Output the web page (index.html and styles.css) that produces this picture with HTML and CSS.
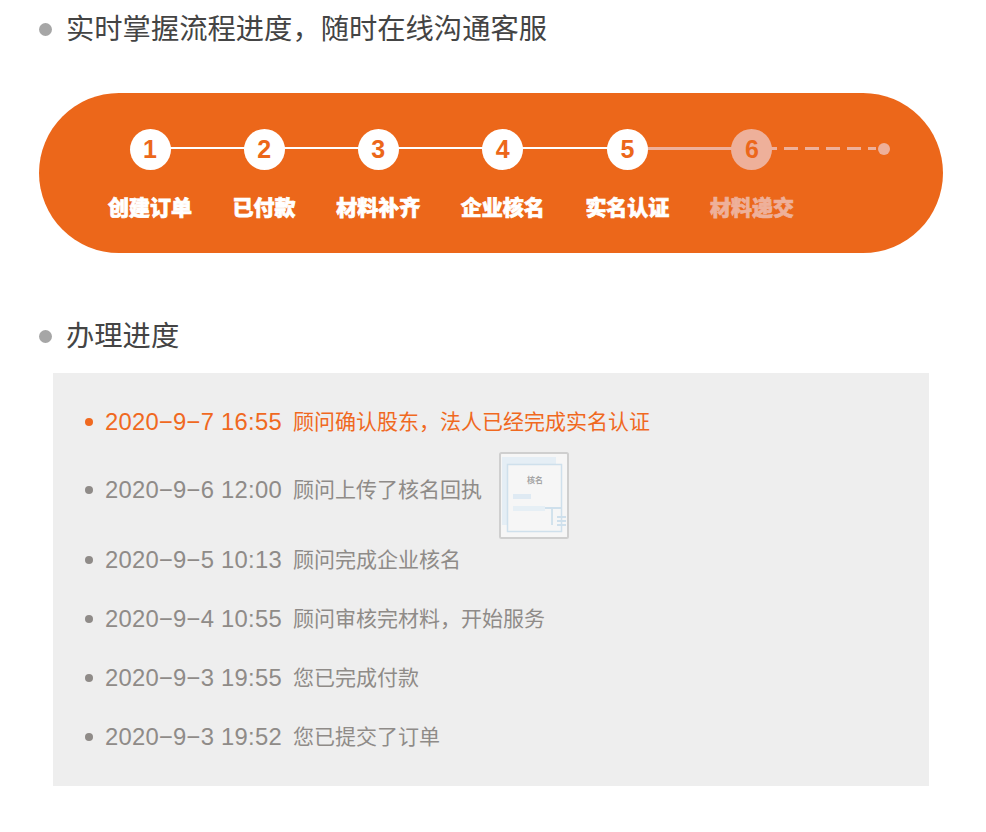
FILE: index.html
```html
<!DOCTYPE html>
<html lang="zh-CN">
<head>
<meta charset="utf-8">
<title>办理进度</title>
<link rel="stylesheet" href="styles.css">
</head>
<body>
<main class="page">
  <h2 class="heading heading-first">实时掌握流程进度，随时在线沟通客服</h2>
  <section class="pill">
    <ol class="steps">
      <li class="step"><span class="num">1</span><span class="label">创建订单</span></li>
      <li class="step"><span class="num">2</span><span class="label">已付款</span></li>
      <li class="step"><span class="num">3</span><span class="label">材料补齐</span></li>
      <li class="step"><span class="num">4</span><span class="label">企业核名</span></li>
      <li class="step step-last-done"><span class="num">5</span><span class="label">实名认证</span></li>
      <li class="step step-current"><span class="num">6</span><span class="label">材料递交</span></li>
    </ol>
  </section>
  <h2 class="heading heading-second">办理进度</h2>
  <section class="panel">
    <ul class="log">
      <li class="row row-active"><span class="time">2020−9−7 16:55</span><span class="msg">顾问确认股东，法人已经完成实名认证</span></li>
      <li class="row row-image"><span class="time">2020−9−6 12:00</span><span class="msg">顾问上传了核名回执</span>
        <svg class="thumb" viewBox="0 0 70 87" width="70" height="87">
          <defs><filter id="soft"><feGaussianBlur stdDeviation="0.5"/></filter></defs>
          <rect x="1" y="1" width="68" height="85" rx="1.5" fill="#f6f6f6" stroke="#cfcfcf" stroke-width="2"/>
          <g filter="url(#soft)">
            <rect x="3" y="5" width="54" height="68" fill="#e5eef5"/>
            <rect x="8.500" y="12.500" width="54" height="67" fill="#f6f6f6" stroke="#cfe0ec" stroke-width="1.500"/>
            <rect x="14" y="42" width="18" height="5" fill="#dfeaf3"/>
            <rect x="14" y="54" width="32" height="5" fill="#e6eff5"/>
            <path d="M46 56h16M53 56v17M58 65h9M58 69h9M58 73h9" fill="none" stroke="#cfe0ec" stroke-width="1.800"/>
          </g>
          <text class="thumb-text" x="36" y="31">核名</text>
        </svg>
      </li>
      <li class="row"><span class="time">2020−9−5 10:13</span><span class="msg">顾问完成企业核名</span></li>
      <li class="row"><span class="time">2020−9−4 10:55</span><span class="msg">顾问审核完材料，开始服务</span></li>
      <li class="row"><span class="time">2020−9−3 19:55</span><span class="msg">您已完成付款</span></li>
      <li class="row"><span class="time">2020−9−3 19:52</span><span class="msg">您已提交了订单</span></li>
    </ul>
  </section>
</main>
</body>
</html>
```
FILE: styles.css
```css
* { box-sizing: border-box; }
html, body { margin: 0; padding: 0; background: #fff; }
body {
  font-family: "Liberation Sans", "Noto Sans CJK SC", sans-serif;
}
.page { padding: 0 43px 0 39px; }
.heading {
  display: flex;
  align-items: center;
  gap: 14px;
  margin: 0;
  height: 40px;
  font-size: 28.3px;
  font-weight: 400;
  line-height: 40px;
  color: #444;
}
.heading::before {
  content: "";
  width: 13px;
  height: 13px;
  border-radius: 50%;
  background: #a6a6a6;
  flex: none;
}
.heading-first { margin-top: 9px; }
.heading-second { margin-top: 63px; }
.pill {
  margin: 44px 0 0;
  height: 160px;
  border-radius: 80px;
  background: #ec671a;
  padding: 35.500px 0 0 69px;
}
.steps {
  display: flex;
  gap: 40.600px;
  margin: 0;
  padding: 0;
  list-style: none;
}
.step {
  position: relative;
  display: flex;
  flex-direction: column;
  align-items: center;
  gap: 23px;
  color: #fff;
}
.step::before, .step::after {
  content: "";
  position: absolute;
  top: 18px;
  height: 2px;
  background: #fff;
}
.step::before { left: -21px; right: 50%; }
.step::after { left: 50%; right: -21px; }
.step:first-child::before { display: none; }
.step-last-done::after { background: #eeb09a; height: 3px; }
.step-current::before { background: #eeb09a; height: 3px; }
.step-current::after {
  right: auto;
  left: 50%;
  width: 124px;
  height: 3px;
  background: linear-gradient(90deg, #eeb09a 14px, transparent 14px) 11px 0 / 21px 100%;
}
.num {
  position: relative;
  z-index: 1;
  width: 41px;
  height: 41px;
  border-radius: 50%;
  background: #fff;
  color: #ec671a;
  font-size: 25px;
  font-weight: 700;
  line-height: 41px;
  text-align: center;
}
.label {
  font-size: 21px;
  font-weight: 900;
  line-height: 30px;
  white-space: nowrap;
  -webkit-text-stroke: 0.7px currentColor;
}
.step-current { color: #eeb09a; }
.step-current .num { background: #eeb09a; }
.pill .step-current .num::after {
  content: "";
  position: absolute;
  left: 147px;
  top: 14.500px;
  width: 12px;
  height: 12px;
  border-radius: 50%;
  background: #eeb09a;
}
.panel {
  margin: 17px 14px 0 14px;
  height: 413px;
  background: #eee;
  padding: 19px 0 0 32px;
}
.log { margin: 0; padding: 0; list-style: none; }
.row {
  display: flex;
  height: 59px;
  font-size: 21px;
  line-height: 59px;
  color: #8f8b88;
  white-space: pre;
}
.row::before {
  content: "";
  flex: none;
  width: 8px;
  height: 8px;
  margin: 26px 12px 0 0;
  border-radius: 50%;
  background: currentColor;
}
.row-active { color: #f0691f; }
.row-image { height: 79px; padding-top: 9px; }
.time { width: 188px; flex: none; font-size: 23.800px; letter-spacing: 0.250px; }
.msg { flex: none; }
.thumb { flex: none; margin: -8px 0 0 17px; }
.thumb-text {
  font-size: 8px;
  font-weight: 700;
  fill: #a5a5a5;
  text-anchor: middle;
}
```
